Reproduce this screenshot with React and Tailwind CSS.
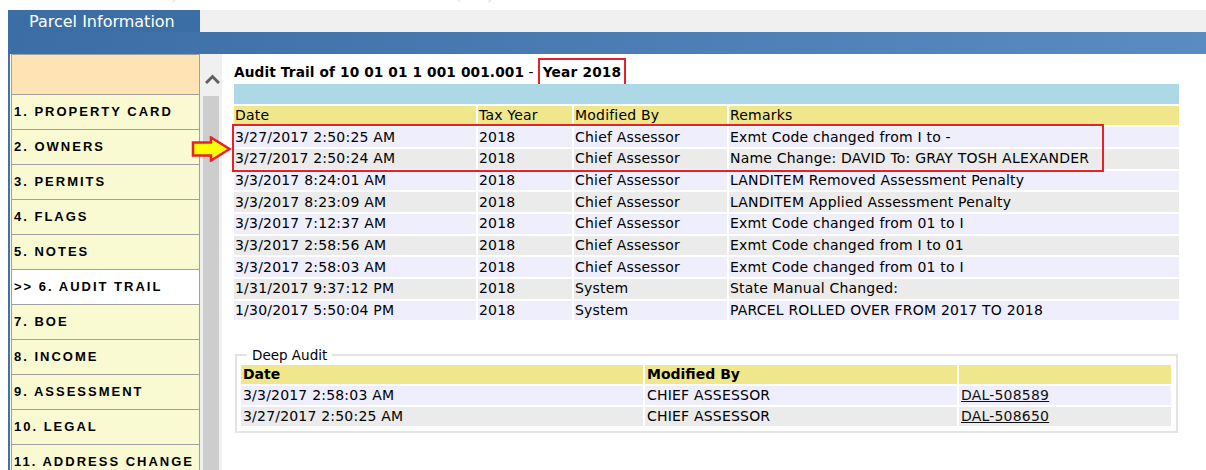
const rows = [
  ["3/27/2017 2:50:25 AM", "2018", "Chief Assessor", "Exmt Code changed from I to -"],
  ["3/27/2017 2:50:24 AM", "2018", "Chief Assessor", "Name Change: DAVID To: GRAY TOSH ALEXANDER"],
  ["3/3/2017 8:24:01 AM", "2018", "Chief Assessor", "LANDITEM Removed Assessment Penalty"],
  ["3/3/2017 8:23:09 AM", "2018", "Chief Assessor", "LANDITEM Applied Assessment Penalty"],
  ["3/3/2017 7:12:37 AM", "2018", "Chief Assessor", "Exmt Code changed from 01 to I"],
  ["3/3/2017 2:58:56 AM", "2018", "Chief Assessor", "Exmt Code changed from I to 01"],
  ["3/3/2017 2:58:03 AM", "2018", "Chief Assessor", "Exmt Code changed from 01 to I"],
  ["1/31/2017 9:37:12 PM", "2018", "System", "State Manual Changed:"],
  ["1/30/2017 5:50:04 PM", "2018", "System", "PARCEL ROLLED OVER FROM 2017 TO 2018"],
];

const deep = [
  ["3/3/2017 2:58:03 AM", "CHIEF ASSESSOR", "DAL-508589"],
  ["3/27/2017 2:50:25 AM", "CHIEF ASSESSOR", "DAL-508650"],
];

const menu = [
  "1. PROPERTY CARD",
  "2. OWNERS",
  "3. PERMITS",
  "4. FLAGS",
  "5. NOTES",
  ">> 6. AUDIT TRAIL",
  "7. BOE",
  "8. INCOME",
  "9. ASSESSMENT",
  "10. LEGAL",
  "11. ADDRESS CHANGE",
  "12. SALES",
];

export default function App() {
  return (
    <div className="relative h-[470px] w-[1206px] overflow-hidden bg-white font-['DejaVu_Sans',Verdana,sans-serif] text-[13px] text-black">
      {/* faint cut-off text at top */}
      <div className="h-[10px] overflow-hidden pl-[63px]">
        <div className="-mt-[13px] whitespace-nowrap leading-[16px] tracking-[0.75px] text-[#e2e0d8]">
          Parcel Summary for 10 01 01 1 001 001.001 - Real Property Record
        </div>
      </div>

      {/* tab row */}
      <div className="ml-[8px] flex h-[22px]">
        <div className="flex w-[192px] items-center bg-[#3a6ea5] pl-[21px] pt-[1px] text-[16px] leading-none text-white">
          Parcel Information
        </div>
        <div className="flex-1 bg-[#f0f0f0]" />
      </div>

      {/* blue band */}
      <div className="ml-[8px] h-[22px] bg-linear-to-r from-[#3c6ea5] to-[#5a8cc2]" />

      {/* body */}
      <div className="ml-[8px] flex h-[416px] border-l-2 border-[#4271a8]">
        {/* sidebar */}
        <div className="ml-[1px] w-[189px] shrink-0 border border-b-0 border-[#a0a0a0] font-['Liberation_Sans',Arial,sans-serif] text-[13px] font-bold tracking-[2px]">
          <div className="h-[39px] bg-[#fee3b5]" />
          {menu.map((m) => (
            <div
              key={m}
              className={
                m.startsWith(">>")
                  ? "flex h-[35px] items-center border-t border-[#a0a0a0] bg-white pl-[2px] whitespace-nowrap"
                  : "flex h-[35px] items-center border-t border-[#a0a0a0] bg-[#f9f9d2] pl-[2px] whitespace-nowrap"
              }
            >
              {m}
            </div>
          ))}
        </div>

        {/* scrollbar */}
        <div className="flex w-[22px] shrink-0 flex-col bg-[#f0f0f0]">
          <div className="flex h-[42px] justify-center pt-[19px] pl-[2px]">
            <svg width="15" height="11" viewBox="0 0 15 11">
              <path d="M1 10 L7.5 3.5 L14 10" fill="none" stroke="#606060" strokeWidth="3" />
            </svg>
          </div>
          <div className="mx-[3px] flex-1 bg-[#cdcdcd]" />
        </div>

        {/* main */}
        <div className="flex-1 pl-[12px] pt-[10px]">
          <div className="whitespace-nowrap text-[13.7px] leading-[16px]">
            <span className="font-bold tracking-[0.12px]">Audit Trail of 10 01 01 1 001 001.001</span>
            <span> - </span>
            <span className="border-2 border-[#e8202a] px-[3px] pt-[4px] pb-[5px] font-bold tracking-[0.2px]">Year 2018</span>
          </div>

          <div className="relative mt-[4px] w-[945px] text-[14px] tracking-[0.2px]">
            <div className="grid grid-cols-[242px_94px_153px_450px] gap-[2px]">
              <div className="col-span-4 h-[19.67px] bg-[#add8e6]" />
              {["Date", "Tax Year", "Modified By", "Remarks"].map((h) => (
                <div key={h} className="flex h-[19.67px] items-center bg-[#f0e68c] pl-[1px] whitespace-nowrap">
                  {h}
                </div>
              ))}
              {rows.map((r, i) =>
                r.map((c, j) => (
                  <div
                    key={i + "-" + j}
                    className={
                      i % 2 === 0
                        ? "flex h-[19.67px] items-center bg-[#eeeefd] pl-[1px] whitespace-nowrap"
                        : "flex h-[19.67px] items-center bg-[#ebebeb] pl-[1px] whitespace-nowrap"
                    }
                  >
                    {c}
                  </div>
                ))
              )}
            </div>
            {/* red annotation box around first two rows */}
            <div className="pointer-events-none absolute left-[-2px] top-[40px] h-[48px] w-[872px] border-2 border-[#e8202a]" />
          </div>

          {/* Deep Audit */}
          <fieldset className="ml-[1px] mt-[27px] w-[943px] border-2 border-[#e4e4e4] px-[4px] pb-[5px] pr-[5px] pt-[2px] text-[14px] tracking-[0.2px]">
            <legend className="ml-[6px] px-[5px] text-[13.5px] leading-[16px] tracking-normal">Deep Audit</legend>
            <div className="grid grid-cols-[402px_312px_212px] gap-[2px]">
              <div className="flex h-[19px] items-center bg-[#f0e68c] pl-[2px] font-bold tracking-normal">Date</div>
              <div className="flex h-[19px] items-center bg-[#f0e68c] pl-[2px] font-bold tracking-normal">Modified By</div>
              <div className="flex h-[19px] items-center bg-[#f0e68c] pl-[2px]" />
              {deep.map((r, i) => (
                <div key={i} className="contents">
                  <div className={i === 0 ? "flex h-[19px] items-center bg-[#eeeefd] pl-[2px]" : "flex h-[19px] items-center bg-[#ebebeb] pl-[2px]"}>
                    {r[0]}
                  </div>
                  <div className={i === 0 ? "flex h-[19px] items-center bg-[#eeeefd] pl-[2px]" : "flex h-[19px] items-center bg-[#ebebeb] pl-[2px]"}>
                    {r[1]}
                  </div>
                  <div className={i === 0 ? "flex h-[19px] items-center bg-[#eeeefd] pl-[2px]" : "flex h-[19px] items-center bg-[#ebebeb] pl-[2px]"}>
                    <a className="text-[#111] underline">{r[2]}</a>
                  </div>
                </div>
              ))}
            </div>
          </fieldset>
        </div>
      </div>

      {/* yellow arrow annotation */}
      <svg className="absolute left-[191px] top-[136px]" width="42" height="26" viewBox="0 0 42 26">
        <path
          d="M2 6.5 L20 6.5 L20 1.5 L38.5 13 L20 24.5 L20 19.5 L2 19.5 Z"
          fill="#ffff00"
          stroke="#e8202a"
          strokeWidth="2.5"
          strokeLinejoin="miter"
        />
      </svg>
    </div>
  );
}
